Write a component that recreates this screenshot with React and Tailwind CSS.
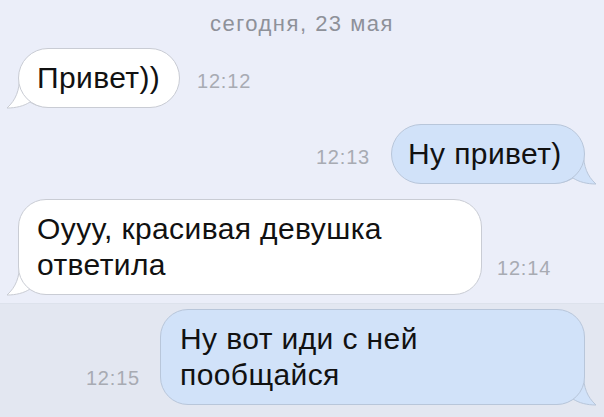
import React from "react";

const font = { fontFamily: '"Liberation Sans", Arial, sans-serif' };

function TailLeft({ fill, stroke }) {
  return (
    <svg
      className="absolute left-[-12px] bottom-[-2px]"
      width="44"
      height="34"
      viewBox="0 0 44 34"
    >
      <path
        d="M14 1 C14 14 10 24 1 32 C10 32 18 30 24 26 C30 30 36 31 43 31 L43 1 Z"
        fill={fill}
      />
      <path
        d="M13.5 1 C13.5 14 10 24 1 32 C10 32 18 30 24 26 C30 30 36 31 43 31"
        fill="none"
        stroke={stroke}
        strokeWidth="1"
      />
    </svg>
  );
}

function TailRight({ fill, stroke }) {
  return (
    <svg
      className="absolute right-[-12px] bottom-[-2px]"
      width="44"
      height="34"
      viewBox="0 0 44 34"
      style={{ transform: "scaleX(-1)" }}
    >
      <path
        d="M14 1 C14 14 10 24 1 32 C10 32 18 30 24 26 C30 30 36 31 43 31 L43 1 Z"
        fill={fill}
      />
      <path
        d="M13.5 1 C13.5 14 10 24 1 32 C10 32 18 30 24 26 C30 30 36 31 43 31"
        fill="none"
        stroke={stroke}
        strokeWidth="1"
      />
    </svg>
  );
}

function Time({ children }) {
  return (
    <div className="text-[20px] leading-[24px] tracking-[0.8px] text-[#a8abb3] mb-[15px] shrink-0">
      {children}
    </div>
  );
}

export default function App() {
  return (
    <div
      className="w-[604px] h-[417px] bg-[#ebeef9] overflow-hidden flex flex-col"
      style={font}
    >
      <div className="pt-[11px] text-center text-[22px] leading-[26px] tracking-[1.5px] text-[#8e9199]">
        сегодня, 23 мая
      </div>

      {/* row 1 */}
      <div className="mt-[11px] pl-[18px] flex items-end gap-[17px]">
        <div className="relative">
          <TailLeft fill="#ffffff" stroke="#c9ccd4" />
          <div className="relative w-[162px] bg-white border border-[#c9ccd4] rounded-[30px] pl-[18px] py-[11px] text-[30px] leading-[36px] tracking-[0.4px] text-[#111] whitespace-nowrap">
            Привет))
          </div>
        </div>
        <Time>12:12</Time>
      </div>

      {/* row 2 */}
      <div className="mt-[16px] pr-[19px] flex items-end justify-end gap-[21px]">
        <Time>12:13</Time>
        <div className="relative">
          <TailRight fill="#d1e2f9" stroke="#b8c6da" />
          <div className="relative w-[194px] bg-[#d1e2f9] border border-[#b8c6da] rounded-[30px] pl-[16px] py-[11px] text-[30px] leading-[36px] tracking-[0.4px] text-[#111] whitespace-nowrap">
            Ну привет)
          </div>
        </div>
      </div>

      {/* row 3 */}
      <div className="mt-[15px] pl-[18px] flex items-end gap-[15px]">
        <div className="relative">
          <TailLeft fill="#ffffff" stroke="#c9ccd4" />
          <div className="relative w-[464px] bg-white border border-[#c9ccd4] rounded-[28px] pl-[18px] pr-[18px] py-[11px] text-[30px] leading-[36px] tracking-[0.4px] text-[#111] whitespace-nowrap">
            Оууу, красивая девушка
            <br />
            ответила
          </div>
        </div>
        <Time>12:14</Time>
      </div>

      {/* row 4 highlighted */}
      <div className="mt-[8px] flex-1 bg-[#e3e7f1] border-t border-[#dde2ec] pt-[5px] pr-[19px] flex items-start justify-end">
        <div className="flex items-end gap-[20px]">
          <Time>12:15</Time>
          <div className="relative">
            <TailRight fill="#d1e2f9" stroke="#b8c6da" />
            <div className="relative w-[425px] bg-[#d1e2f9] border border-[#b8c6da] rounded-[28px] pl-[19px] pr-[18px] py-[11px] text-[30px] leading-[36px] tracking-[0.4px] text-[#111] whitespace-nowrap">
              Ну вот иди с ней
              <br />
              пообщайся
            </div>
          </div>
        </div>
      </div>
    </div>
  );
}
